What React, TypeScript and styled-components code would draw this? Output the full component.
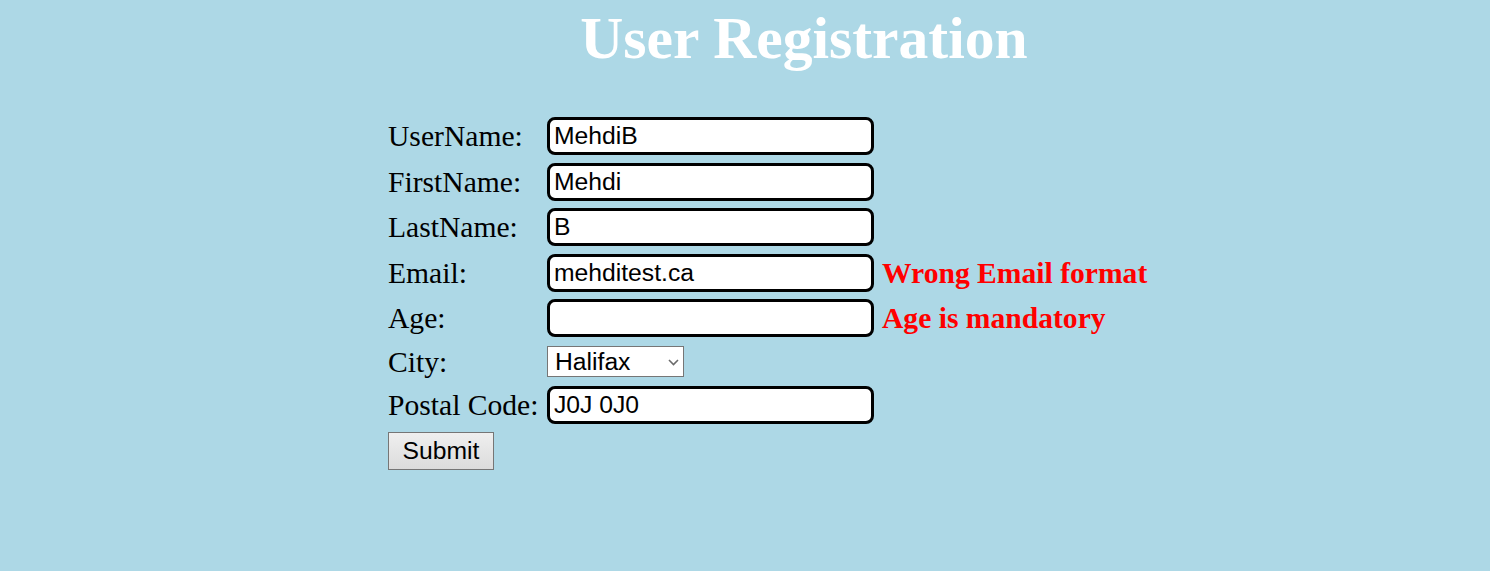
import React from "react";
import styled, { createGlobalStyle } from "styled-components";

const GlobalStyle = createGlobalStyle`
	html, body {
		margin: 0;
		padding: 0;
		background-color: #add8e6;
	}
	body {
		padding: 8px 0;
		font-family: "Liberation Serif", "Times New Roman", serif;
		min-height: 571px;
		box-sizing: border-box;
	}
`;

const fields = [
	{ label: "UserName:", value: "MehdiB", error: "" },
	{ label: "FirstName:", value: "Mehdi", error: "" },
	{ label: "LastName:", value: "B", error: "" },
	{ label: "Email:", value: "mehditest.ca", error: "Wrong Email format" },
	{ label: "Age:", value: "", error: "Age is mandatory" },
];

export default function App() {
	return (
		<>
			<GlobalStyle />
			<Page>
				<Title>User Registration</Title>
				<Form onSubmit={(e) => e.preventDefault()}>
					{fields.map((f) => (
						<React.Fragment key={f.label}>
							<Label>{f.label}</Label>
							<TextInput defaultValue={f.value} />
							<ErrorText>{f.error}</ErrorText>
						</React.Fragment>
					))}

					<Label>City:</Label>
					<SelectWrap>
						<Select defaultValue="Halifax">
							<option>Halifax</option>
							<option>Toronto</option>
							<option>Montreal</option>
						</Select>
						<Chevron width="11" height="7" viewBox="0 0 11 7">
							<path d="M1 1 L5.5 5.5 L10 1" fill="none" stroke="#6b6b6b" strokeWidth="1.6" />
						</Chevron>
					</SelectWrap>
					<ErrorText />

					<Label>Postal Code:</Label>
					<TextInput defaultValue="J0J 0J0" />
					<ErrorText />

					<SubmitButton type="submit">Submit</SubmitButton>
				</Form>
			</Page>
		</>
	);
}

const Page = styled.div`
	display: flex;
	flex-direction: column;
`;

const Title = styled.h1`
	margin: 0;
	padding-left: 118px;
	text-align: center;
	color: #ffffff;
	font-family: "Liberation Serif", "Times New Roman", serif;
	font-weight: 700;
	font-size: 59.6px;
	line-height: 60px;
`;

const Form = styled.form`
	display: grid;
	grid-template-columns: 159px 327px auto;
	column-gap: 0;
	row-gap: 7.5px;
	align-items: center;
	margin: 49px 0 0 388px;
`;

const Label = styled.label`
	font-size: 29.6px;
	line-height: 34px;
	color: #000;
	white-space: nowrap;
`;

const TextInput = styled.input`
	box-sizing: border-box;
	width: 327px;
	height: 38px;
	border: 3px solid #000;
	border-radius: 8px;
	background: #fff;
	padding: 0 4px;
	font-family: "Liberation Sans", Arial, sans-serif;
	font-size: 24.7px;
	color: #000;
	outline: none;
`;

const ErrorText = styled.span`
	padding-left: 8px;
	color: #ff0000;
	font-weight: 700;
	font-size: 29.6px;
	line-height: 34px;
	white-space: nowrap;
`;

const SelectWrap = styled.span`
	position: relative;
	display: inline-block;
	width: 137px;
	height: 31px;
`;

const Select = styled.select`
	appearance: none;
	box-sizing: border-box;
	width: 137px;
	height: 31px;
	border: 1px solid #767676;
	border-radius: 0;
	background: #fff;
	padding: 0 0 0 7px;
	font-family: "Liberation Sans", Arial, sans-serif;
	font-size: 24.7px;
	color: #000;
	outline: none;
`;

const Chevron = styled.svg`
	position: absolute;
	right: 5px;
	top: 13px;
	pointer-events: none;
`;

const SubmitButton = styled.button`
	grid-column: 1 / 2;
	justify-self: start;
	box-sizing: border-box;
	width: 106px;
	height: 38px;
	border: 1px solid #767676;
	border-radius: 0;
	background: linear-gradient(#efefef, #dcdcdc);
	font-family: "Liberation Sans", Arial, sans-serif;
	font-size: 24.7px;
	color: #000;
	padding: 0;
`;
